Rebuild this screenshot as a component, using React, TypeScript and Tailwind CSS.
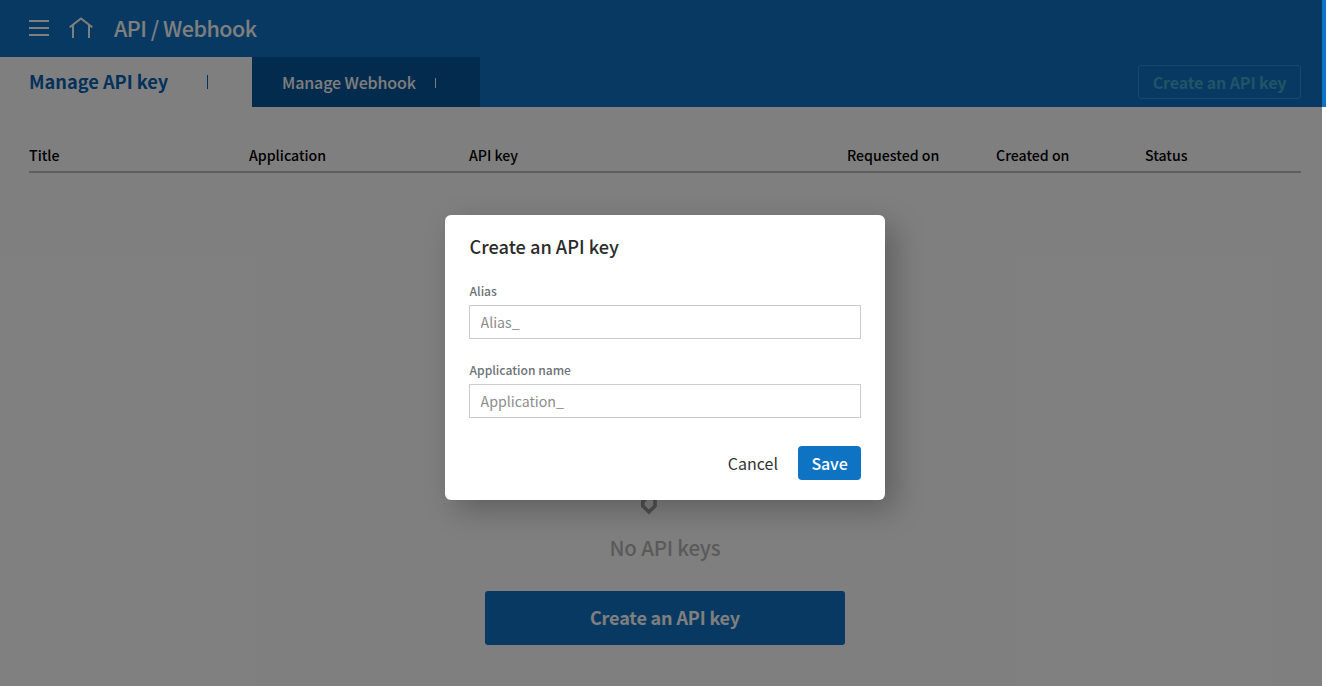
const columns = [
  { label: 'Title', width: 'w-[220px]' },
  { label: 'Application', width: 'w-[220px]' },
  { label: 'API key', width: 'w-[378px]' },
  { label: 'Requested on', width: 'w-[149px]' },
  { label: 'Created on', width: 'w-[149px]' },
  { label: 'Status', width: 'flex-1' },
];

function MenuIcon() {
  return (
    <svg width="20" height="16" viewBox="0 0 20 16" fill="white" shapeRendering="crispEdges">
      <path d="M0 0h20v2H0zM0 7h20v2H0zM0 14h20v2H0z" />
    </svg>
  );
}

function HomeIcon() {
  return (
    <svg width="24" height="22" viewBox="0 0 24 22" fill="none" stroke="white" strokeWidth="2">
      <path d="M.7 10.2 12 1.4l11.3 8.8M4 8v13M20 8v13" />
    </svg>
  );
}

function KeyIcon() {
  return (
    <svg width="56" height="56" viewBox="0 0 56 56" fill="none" stroke="#a0a0a0" strokeWidth="3.6">
      <circle cx="34" cy="18" r="14" />
      <path d="M5.8 28v18l6.1 5.9 6.1-5.9V38l-4-4" />
      <path d="M7.4 41.6l1.6-1.6" strokeWidth="2" />
    </svg>
  );
}

function Field({ label, placeholder }: { label: string; placeholder: string }) {
  return (
    <label className="flex flex-col">
      <span className="h-[21px] pl-[0.5px] text-[12.1px] leading-[20px] font-medium text-[#6c7277]">{label}</span>
      <input
        placeholder={placeholder}
        className="mt-[3px] h-[34px] w-full border border-[#cccccc] px-[10.5px] text-[14.2px] outline-none placeholder:text-[#8c8c8c]"
      />
    </label>
  );
}

export default function App() {
  return (
    <div className="relative h-[686px] w-[1326px] overflow-hidden bg-white font-['Noto_Sans_CJK_KR',sans-serif]">
      <header className="flex h-[57px] items-center bg-[#0f73c4] pb-px pl-[29px] text-white">
        <MenuIcon />
        <div className="ml-5 flex">
          <HomeIcon />
        </div>
        <h1 className="ml-[21px] h-[34px] text-[21.5px] leading-[34px] font-medium tracking-[-0.5px]">API / Webhook</h1>
      </header>
      <nav className="flex h-[50px] bg-[#0f73c4]">
        <div className="flex w-[252px] items-center bg-white pl-[29px] text-[#0663b5]">
          <span className="h-[28px] w-[178px] text-[18.2px] leading-[27px] font-bold">Manage API key</span>
          <span className="h-[14px] w-px bg-[#0663b5]" />
        </div>
        <div className="flex w-[228px] items-center bg-[#04579b] pl-[30px] text-white">
          <span className="w-[153px] text-[16px] font-medium tracking-[-0.12px]">Manage Webhook</span>
          <span className="mt-px h-[10px] w-px bg-white" />
        </div>
        <button className="mt-2 mr-[25px] ml-auto h-[34px] w-[163px] rounded-[3px] border border-[#3a8cd0] text-[16px] leading-[32px] font-bold tracking-[-0.12px] text-[#44a9ce]">
          Create an API key
        </button>
      </nav>
      <main className="px-[29px] pr-[25px]">
        <div className="flex h-[66px] items-end border-b-2 border-[#bdbdbd] pb-[6px] text-[14.15px] leading-[20px] font-medium text-black">
          {columns.map((c) => (
            <div key={c.label} className={c.width}>
              {c.label}
            </div>
          ))}
        </div>
        <section className="flex flex-col items-center pt-[287px]">
          <div className="flex h-[56px]">
            <KeyIcon />
          </div>
          <p className="mt-[15px] h-[34px] text-[20.5px] leading-[32px] font-medium tracking-[-0.2px] text-[#b5b5b5]">No API keys</p>
          <button className="mt-[26px] h-[54px] w-[360px] rounded-[3px] bg-[#0f73c4] pb-[2px] text-[18px] font-bold tracking-[-0.15px] text-white">
            Create an API key
          </button>
        </section>
      </main>

      <div className="absolute inset-y-0 left-0 w-[1322px] bg-black/50" />
      <div
        role="dialog"
        className="absolute top-[215px] left-[445px] flex h-[285px] w-[440px] flex-col rounded-[6px] bg-white px-6 pt-[18px] shadow-[10px_10px_30px_rgba(0,0,0,0.25)]"
      >
        <h2 className="h-[29px] pl-[0.5px] text-[18.2px] leading-[26px] font-medium text-[#2b2b2b]">Create an API key</h2>
        <div className="mt-[19px] flex flex-col gap-[21px]">
          <Field label="Alias" placeholder="Alias_" />
          <Field label="Application name" placeholder="Application_" />
        </div>
        <div className="mt-[28px] flex h-[34px] items-center justify-end">
          <button className="mr-5 text-[16px] text-[#333333]">Cancel</button>
          <button className="h-[34px] w-[63px] rounded-[4px] bg-[#0f73c4] text-[16px] font-medium tracking-[-0.1px] text-white">Save</button>
        </div>
      </div>
    </div>
  );
}
